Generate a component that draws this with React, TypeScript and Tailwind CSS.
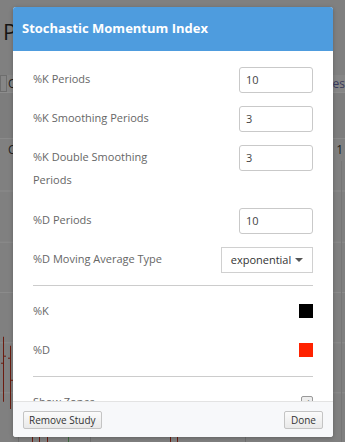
import React from "react";

function Row({ label, children, extra = "" }: { label: React.ReactNode; children?: React.ReactNode; extra?: string }) {
  return (
    <div className={`flex items-start justify-between min-h-[26px] mb-[13px] ${extra}`}>
      <div className="leading-[23px] text-[11px] text-[#666] w-[180px]">{label}</div>
      {children}
    </div>
  );
}

function NumInput({ value }: { value: string }) {
  return (
    <div className="w-[74px] h-[26px] border border-[#c9c9c9] rounded-[3px] flex items-center pl-[6px] text-[11px] text-[#444]">
      {value}
    </div>
  );
}

export default function App() {
  return (
    <div className="relative w-[345px] h-[442px] overflow-hidden bg-[#808080] font-['Open_Sans',sans-serif]">
      {/* background page (under overlay) */}
      <div className="flex flex-col h-full">
        <div className="h-[75px] pl-[3px] pt-[19px] text-[22px] leading-[24px] text-[#151515] whitespace-nowrap">Price Chart</div>
        <div className="h-[18px] bg-[#868686] flex items-center border-b border-[#8d8d8d]">
          <div className="w-[330px] flex items-center gap-[1px]">
            <div className="w-[7px] h-[17px] border border-[#6e6e6e]" />
            <span className="text-[12px] text-[#1c1c1c] leading-none">Q</span>
          </div>
          <span className="text-[12px] text-[#3b3b5e] whitespace-nowrap">Studies</span>
        </div>
        <div className="h-[46px] bg-[#7d7d7d] border-b border-[#8a8a8a]" />
        <div className="h-[22px] flex items-center">
          <span className="w-[330px] pl-[8px] text-[12px] text-[#222]">C</span>
          <span className="text-[12px] text-[#1a1a1a] whitespace-nowrap">: 1</span>
        </div>
        <svg className="flex-1 w-full" viewBox="0 0 345 280" preserveAspectRatio="none">
          {[30, 81, 131, 181, 231].map((y) => (
            <line key={y} x1="0" x2="345" y1={y} y2={y} stroke="#8b8b8b" strokeWidth="1" />
          ))}
          <line x1="341.5" x2="341.5" y1="0" y2="280" stroke="#767676" />
          <line x1="18.5" x2="18.5" y1="270" y2="280" stroke="#6f6f6f" />
          <line x1="90.5" x2="90.5" y1="270" y2="280" stroke="#6f6f6f" />
          <line x1="245.5" x2="245.5" y1="270" y2="280" stroke="#6f6f6f" />
          <g stroke="#6b1c10" strokeWidth="1">
            <line x1="3.5" x2="3.5" y1="175" y2="240" />
            <line x1="1" x2="3.5" y1="201.5" y2="201.5" />
            <line x1="3.5" x2="6" y1="194.5" y2="194.5" />
            <line x1="10.5" x2="10.5" y1="184" y2="247" />
            <line x1="8" x2="10.5" y1="196.5" y2="196.5" />
            <line x1="10.5" x2="13" y1="218.5" y2="218.5" />
            <line x1="32.5" x2="32.5" y1="270" y2="280" />
            <line x1="39.5" x2="39.5" y1="270" y2="280" />
            <line x1="47.5" x2="47.5" y1="270" y2="280" />
            <line x1="170.5" x2="170.5" y1="270" y2="280" />
            <line x1="177.5" x2="177.5" y1="270" y2="280" />
          </g>
          <line x1="68.5" x2="68.5" y1="270" y2="280" stroke="#3d6b3d" />
        </svg>
      </div>

      {/* modal */}
      <div className="absolute left-[13px] top-[7px] w-[320px] h-[430px] rounded-[3px] bg-white flex flex-col overflow-hidden shadow-[0_1px_4px_rgba(0,0,0,0.25)]">
        <div className="h-[44px] shrink-0 bg-[#4e9cde] flex items-center pl-[9px] text-white font-bold text-[13px]">
          Stochastic Momentum Index
        </div>
        <div className="flex-1 overflow-hidden px-[20px] pt-[16px]">
          <Row label="%K Periods"><NumInput value="10" /></Row>
          <Row label="%K Smoothing Periods"><NumInput value="3" /></Row>
          <Row label={<>%K Double Smoothing<br />Periods</>} extra="mb-[17px]"><NumInput value="3" /></Row>
          <Row label="%D Periods"><NumInput value="10" /></Row>
          <Row label="%D Moving Average Type">
            <div className="w-[92px] h-[26px] border border-[#d0d0d0] flex items-center justify-center gap-[4px] text-[11px] text-[#333]">
              <span>exponential</span>
              <span className="w-0 h-0 border-l-[4px] border-r-[4px] border-t-[4px] border-l-transparent border-r-transparent border-t-[#555]" />
            </div>
          </Row>
          <div className="h-px bg-[#cccccc] -mt-px mb-[13px]" />
          <Row label="%K">
            <div className="w-[14px] h-[14px] bg-black mt-[5px]" />
          </Row>
          <Row label="%D">
            <div className="w-[14px] h-[14px] bg-[#ff2200] mt-[5px]" />
          </Row>
          <div className="h-px bg-[#cccccc] -mt-px mb-[13px]" />
          <Row label="Show Zones">
            <div className="w-[12px] h-[12px] mt-[6px] border border-[#999] rounded-[2px] bg-[#eee] flex items-center justify-center text-[9px] leading-none text-[#222]">✓</div>
          </Row>
        </div>
        <div className="h-[36px] shrink-0 bg-[#f7f8fa] border-t border-[#e3e3e3] flex items-center justify-between px-[10px]">
          <button className="h-[18px] px-[5px] border border-[#c4c4c4] rounded-[2px] bg-gradient-to-b from-[#fbfbfb] to-[#e9e9e9] text-[10px] text-[#333] leading-none">
            Remove Study
          </button>
          <button className="h-[18px] px-[6px] border border-[#c4c4c4] rounded-[2px] bg-gradient-to-b from-[#fbfbfb] to-[#e9e9e9] text-[10px] text-[#333] leading-none">
            Done
          </button>
        </div>
      </div>
    </div>
  );
}
